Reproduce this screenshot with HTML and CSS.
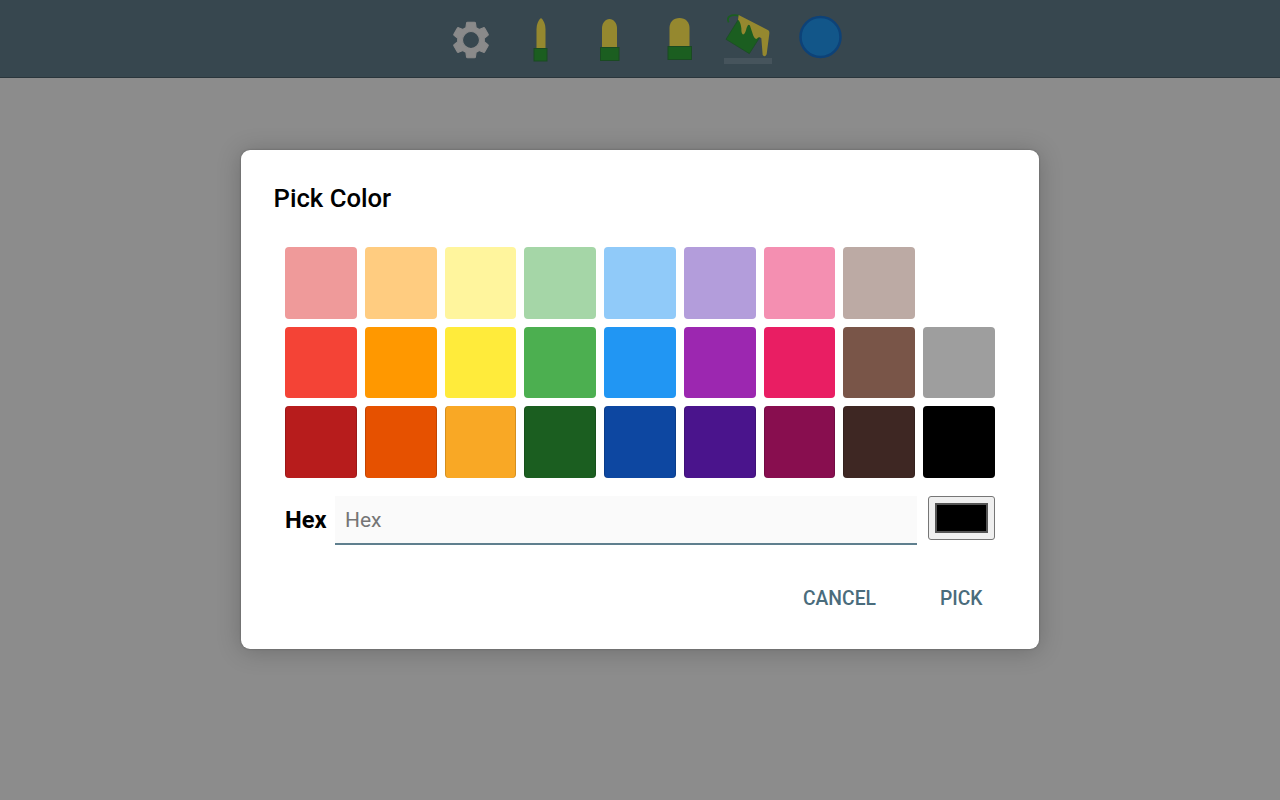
FILE: index.html
```html
<!DOCTYPE html>
<html>
<head>
<meta charset="utf-8">
<title>Pick Color</title>
<link rel="stylesheet" href="styles.css">
</head>
<body>
<div class="toolbar">
    <svg class="tool" viewBox="0 0 48 49"><g transform="translate(24 25) scale(1.85) translate(-12 -12)"><path class="gear" fill-rule="evenodd" d="M19.14 12.94c.04-.3.06-.61.06-.94 0-.32-.02-.64-.07-.94l2.03-1.58c.18-.14.23-.41.12-.61l-1.92-3.32c-.12-.22-.37-.29-.59-.22l-2.39.96c-.5-.38-1.03-.7-1.62-.94l-.36-2.54c-.04-.24-.24-.41-.48-.41h-3.84c-.24 0-.43.17-.47.41l-.36 2.54c-.59.24-1.13.57-1.62.94l-2.39-.96c-.22-.08-.47 0-.59.22L2.74 8.87c-.12.21-.08.47.12.61l2.03 1.58c-.05.3-.09.63-.09.94s.02.64.07.94l-2.03 1.58c-.18.14-.23.41-.12.61l1.92 3.32c.12.22.37.29.59.22l2.39-.96c.5.38 1.03.7 1.62.94l.36 2.54c.05.24.24.41.48.41h3.84c.24 0 .44-.17.47-.41l.36-2.54c.59-.24 1.13-.56 1.62-.94l2.39.96c.22.08.47 0 .59-.22l1.92-3.32c.12-.22.07-.47-.12-.61l-2.01-1.58zM12 16.600c-2.500 0-4.600-2.100-4.600-4.600s2.100-4.600 4.600-4.600 4.600 2.100 4.600 4.600-2.100 4.600-4.600 4.600z"/></g></svg>
    <svg class="tool" viewBox="0 0 48 49"><path class="paint" d="M19.500 33V14C19.500 9 21.500 5 24 3 26.500 5 28.500 9 28.500 14V33z"/><rect class="handle" x="17" y="33.500" width="13" height="12.500"/></svg>
    <svg class="tool" viewBox="0 0 48 49"><path class="paint" d="M16 32V13C16 8 19.500 4 23.500 4 27.500 4 31 8 31 13V32z"/><rect class="handle" x="14.500" y="32.500" width="18.500" height="13"/></svg>
    <svg class="tool" viewBox="0 0 48 49"><path class="paint" d="M13.500 31V13C13.500 7 17.500 3 23.500 3 29.500 3 33.500 7 33.500 13V31z"/><rect class="handle" x="12" y="31.500" width="23.500" height="13"/></svg>
    <svg class="tool" viewBox="0 0 48 49">
        <rect class="tool-mark" x="-1" y="43" width="48" height="6"/>
        <g transform="translate(-25 -10) scale(.3333)">
            <path class="bail" d="M86 52C78 36 92 26 118 32"/>
            <path class="handle-big" d="M116 42L78 103 148 146 187 85z"/>
            <path class="paint" d="M116 30L205 76Q209 79 208 86L200 148Q195 158 188 150L184 100Q177 94 172 100Q166 106 160 92L150 62Q145 54 140 68Q135 90 128 88Q124 86 124 70Q122 50 114 44z"/>
        </g>
    </svg>
    <svg class="tool" viewBox="0 0 48 49"><circle class="color-dot" cx="25.500" cy="22" r="20"/></svg>
</div>
<div class="scrim">
    <div class="dialog">
        <h2 class="dialog-title">Pick Color</h2>
        <div class="palette">
            <div class="c1"></div><div class="c2"></div><div class="c3"></div><div class="c4"></div><div class="c5"></div><div class="c6"></div><div class="c7"></div><div class="c8"></div><div class="none"></div>
            <div class="c9"></div><div class="c10"></div><div class="c11"></div><div class="c12"></div><div class="c13"></div><div class="c14"></div><div class="c15"></div><div class="c16"></div><div class="c17"></div>
            <div class="c18"></div><div class="c19"></div><div class="c20"></div><div class="c21"></div><div class="c22"></div><div class="c23"></div><div class="c24"></div><div class="c25"></div><div class="c26"></div>
        </div>
        <div class="hex-row">
            <label class="hex-label" for="hex">Hex</label>
            <input class="hex-input" id="hex" type="text" placeholder="Hex">
            <input class="hex-color" type="color" value="#000000">
        </div>
        <div class="actions">
            <button class="btn cancel">CANCEL</button>
            <button class="btn">PICK</button>
        </div>
    </div>
</div>
</body>
</html>
```

FILE: styles.css
```css
*{
	margin:0;
	padding:0;
	box-sizing:border-box;
}
html,body{
	height:100%;
}
body{
	display:flex;
	flex-direction:column;
	overflow:hidden;
	font-family:Roboto,"Liberation Sans",sans-serif;
	background-color:#8c8c8c;
}
.toolbar{
	height:78px;
	flex:none;
	display:flex;
	justify-content:center;
	align-items:flex-start;
	gap:21.500px;
	padding:15px 0 0 9.500px;
	background-color:#37474f;
	border-bottom:1px solid #2a363c;
}
.tool{
	width:48px;
	height:49px;
	flex:none;
	display:block;
	overflow:visible;
}
.gear{ fill:#8a8a8a; stroke:#8a8a8a; stroke-width:.6; stroke-linejoin:round; }
.paint{ fill:#95882f; }
.handle{ fill:#1b5e20; stroke:#1a4a22; stroke-width:1; }
.handle-big{ fill:#1b5e20; stroke:#1a4a22; stroke-width:2; }
.bail{ fill:none; stroke:#1b5e20; stroke-width:5; }
.tool-mark{ fill:#46545c; }
.color-dot{ fill:#125689; stroke:#0d4278; stroke-width:2.500; }

.scrim{
	flex:1;
	display:flex;
	justify-content:center;
	align-items:flex-start;
	padding-top:72px;
}
.dialog{
	width:798px;
	height:499px;
	padding:33px 44px 0 44px;
	background-color:#fff;
	border-radius:9px;
	box-shadow:0 2px 24px rgba(0,0,0,.22),0 0 2px rgba(0,0,0,.3);
}
.dialog-title{
	margin-left:-11.500px;
	height:30px;
	font-size:25.700px;
	line-height:30px;
	font-weight:500;
	color:#000;
}
.palette{
	display:grid;
	grid-template-columns:repeat(9,1fr);
	grid-auto-rows:71.500px;
	gap:8px;
	margin-top:34px;
}
.palette div{
	border-radius:4px;
}
.palette div:nth-child(n+19){
	box-shadow:inset 1px 0 rgba(0,0,0,.15),inset -1px 0 rgba(0,0,0,.15);
}
.c1{ background-color:#ef9a9a; }
.c2{ background-color:#ffcc80; }
.c3{ background-color:#fff59d; }
.c4{ background-color:#a5d6a7; }
.c5{ background-color:#90caf9; }
.c6{ background-color:#b39ddb; }
.c7{ background-color:#f48fb1; }
.c8{ background-color:#bcaaa4; }
.c9{ background-color:#f44336; }
.c10{ background-color:#ff9800; }
.c11{ background-color:#ffeb3b; }
.c12{ background-color:#4caf50; }
.c13{ background-color:#2196f3; }
.c14{ background-color:#9c27b0; }
.c15{ background-color:#e91e63; }
.c16{ background-color:#795548; }
.c17{ background-color:#9e9e9e; }
.c18{ background-color:#b71c1c; }
.c19{ background-color:#e65100; }
.c20{ background-color:#f9a825; }
.c21{ background-color:#1b5e20; }
.c22{ background-color:#0d47a1; }
.c23{ background-color:#4a148c; }
.c24{ background-color:#880e4f; }
.c25{ background-color:#3e2723; }
.c26{ background-color:#000; }

.hex-row{
	display:flex;
	align-items:flex-start;
	margin-top:18.500px;
}
.hex-label{
	width:50px;
	flex:none;
	margin-top:11px;
	font-size:23.700px;
	line-height:26px;
	font-weight:700;
	color:#000;
}
.hex-input{
	width:582px;
	height:49px;
	flex:none;
	padding:0 10px;
	border:0;
	border-bottom:2px solid #5f7f8e;
	outline:none;
	background-color:#fafafa;
	font-family:Roboto,"Liberation Sans",sans-serif;
	font-size:21px;
	color:#000;
}
.hex-input::placeholder{
	color:#757575;
}
.hex-color{
	width:67px;
	height:44px;
	flex:none;
	margin-left:11px;
	padding:6px;
	border:1px solid #767676;
	border-radius:3px;
	background-color:#efefef;
}
.hex-color::-webkit-color-swatch-wrapper{
	padding:0;
}
.hex-color::-webkit-color-swatch{
	border:2px solid #555;
	border-radius:0;
}
.actions{
	display:flex;
	justify-content:flex-end;
	margin:39.500px 12.500px 0 0;
}
.btn{
	border:0;
	background:none;
	font-family:Roboto,"Liberation Sans",sans-serif;
	font-size:19.300px;
	line-height:28px;
	font-weight:500;
	color:#4a6c7c;
}
.cancel{
	margin-right:64px;
}
```
